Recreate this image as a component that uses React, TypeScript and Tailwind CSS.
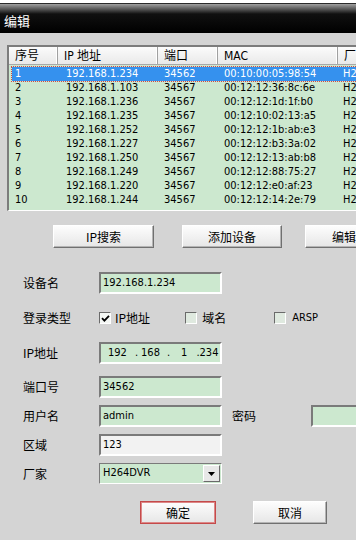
import React from "react";

const LAT = "font-['DejaVu_Sans_Condensed','DejaVu_Sans','Noto_Sans_CJK_SC',sans-serif] text-[11px]";
const CJK = "font-['Noto_Sans_CJK_SC',sans-serif] text-[12px]";

const rows = [
  ["1", "192.168.1.234", "34562", "00:10:00:05:98:54"],
  ["2", "192.168.1.103", "34567", "00:12:12:36:8c:6e"],
  ["3", "192.168.1.236", "34567", "00:12:12:1d:1f:b0"],
  ["4", "192.168.1.235", "34567", "00:12:10:02:13:a5"],
  ["5", "192.168.1.252", "34567", "00:12:12:1b:ab:e3"],
  ["6", "192.168.1.227", "34567", "00:12:12:b3:3a:02"],
  ["7", "192.168.1.250", "34567", "00:12:12:13:ab:b8"],
  ["8", "192.168.1.249", "34567", "00:12:12:88:75:27"],
  ["9", "192.168.1.220", "34567", "00:12:12:e0:af:23"],
  ["10", "192.168.1.244", "34567", "00:12:12:14:2e:79"],
];

function Btn({ label, w, red }: { label: string; w: string; red?: boolean }) {
  return (
    <div
      className={`${w} h-[23px] shrink-0 flex items-center justify-center border ${
        red
          ? "border-[#c44a4a] shadow-[inset_0_0_0_1px_#d88]"
          : "border-t-white border-l-white border-b-[#707070] border-r-[#707070] shadow-[inset_-1px_-1px_0_#b4b4b4]"
      } bg-[linear-gradient(#fdfdfd,#e6e6e6)] text-black ${CJK}`}
    >
      {label}
    </div>
  );
}

function Field({ children, w = "w-[123px]", bg = "bg-[#cce8cf]" }: { children?: React.ReactNode; w?: string; bg?: string }) {
  return (
    <div
      className={`${w} h-[22px] shrink-0 border-2 border-t-[#7a7a7a] border-l-[#7a7a7a] border-b-white border-r-white ${bg} flex items-center pl-[2px] text-black ${LAT}`}
    >
      {children}
    </div>
  );
}

function Label({ children }: { children: React.ReactNode }) {
  return <div className={`w-[76px] shrink-0 text-black ${CJK}`}>{children}</div>;
}

function Check({ checked }: { checked?: boolean }) {
  return (
    <div
      className={`w-[12px] h-[12px] shrink-0 border border-t-[#6a6a6a] border-l-[#6a6a6a] border-b-white border-r-white ${
        checked ? "bg-[#f4f7f4]" : "bg-[#dfe9df]"
      } flex items-center justify-center`}
    >
      {checked && (
        <svg width="9" height="9" viewBox="0 0 9 9">
          <path d="M1 4.2 L3.4 6.6 L8 1.8" stroke="#000" strokeWidth="1.8" fill="none" />
        </svg>
      )}
    </div>
  );
}

export default function App() {
  return (
    <div className="w-[356px] h-[540px] overflow-hidden bg-[#d4d4d4] flex flex-col">
      {/* title bar */}
      <div className="h-[33px] shrink-0 bg-[linear-gradient(#ffffff_0px,#ffffff_3px,#2a2a2a_3px,#2a2a2a_4px,#a0a0a0_4px,#101010_14px,#000000_100%)] flex items-end pb-[5px] pl-[4px]">
        <span className={`text-white ${CJK} text-[13px] leading-[15px]`}>编辑</span>
      </div>

      {/* table */}
      <div className="mt-[12px] ml-[7px] w-[440px] shrink-0 border-t-2 border-l-2 border-t-[#7c7c7c] border-l-[#7c7c7c] border-b border-b-white bg-[#cce8cf]">
        <div className="h-[18px] flex bg-[linear-gradient(#fbfbfb,#e9e9e9)] border-b border-[#a8a8a8] text-black">
          {[
            ["序号", "w-[49px]"],
            ["IP 地址", "w-[100px]"],
            ["端口", "w-[60px]"],
            ["MAC", "w-[120px]"],
            ["厂家", "w-[100px]"],
          ].map(([t, w]) => (
            <div
              key={t}
              className={`${w} shrink-0 h-full flex items-center pl-[6px] border-r border-r-[#a0a0a0] shadow-[inset_-1px_0_0_#ffffff] font-['DejaVu_Sans_Condensed','Noto_Sans_CJK_SC',sans-serif] text-[12px]`}
            >
              {t}
            </div>
          ))}
        </div>
        <div className="pt-[2px] pb-[3px] pl-[3px]">
          {rows.map((r, i) => {
            const sel = i === 0;
            return (
              <div
                key={r[0]}
                className={`h-[14px] flex items-center ${LAT} ${
                  sel ? "bg-[#3591ee] text-white outline outline-1 outline-dotted outline-[#d04848]" : "text-black"
                }`}
              >
                <div className="w-[46px] shrink-0 pl-[3px]">{r[0]}</div>
                <div className="w-[100px] shrink-0 pl-[8px]">{r[1]}</div>
                <div className="w-[60px] shrink-0 pl-[6px]">{r[2]}</div>
                <div className="w-[120px] shrink-0 pl-[6px]">{r[3]}</div>
                <div className="w-[100px] shrink-0 pl-[5px]">H264DVR</div>
              </div>
            );
          })}
        </div>
      </div>

      {/* action buttons */}
      <div className="mt-[14px] ml-[53px] flex shrink-0">
        <Btn label="IP搜索" w="w-[101px]" />
        <div className="w-[28px] shrink-0" />
        <Btn label="添加设备" w="w-[100px]" />
        <div className="w-[23px] shrink-0" />
        <Btn label="编辑" w="w-[78px]" />
      </div>

      {/* form */}
      <div className="ml-[23px] flex flex-col shrink-0">
        <div className="mt-[24px] h-[22px] flex items-center">
          <Label>设备名</Label>
          <Field>192.168.1.234</Field>
        </div>
        <div className="mt-[13px] h-[22px] flex items-center">
          <Label>登录类型</Label>
          <Check checked />
          <span className={`ml-[4px] ${CJK} text-black`}>IP地址</span>
          <div className="ml-[35px]">
            <Check />
          </div>
          <span className={`ml-[5px] ${CJK} text-black`}>域名</span>
          <div className="ml-[48px]">
            <Check />
          </div>
          <span className={`ml-[6px] ${LAT} text-black`}>ARSP</span>
        </div>
        <div className="mt-[13px] h-[22px] flex items-center">
          <Label>IP地址</Label>
          <Field>
            <span className="ml-[5px]">192</span>
            <span className="ml-[8px]">.</span>
            <span className="ml-[3px]">168</span>
            <span className="ml-[7px]">.</span>
            <span className="ml-[11px]">1</span>
            <span className="ml-[9px]">.</span>
            <span>234</span>
          </Field>
        </div>
        <div className="mt-[12px] h-[22px] flex items-center">
          <Label>端口号</Label>
          <Field>34562</Field>
        </div>
        <div className="mt-[7px] h-[22px] flex items-center">
          <Label>用户名</Label>
          <Field>admin</Field>
          <div className={`ml-[10px] w-[79px] shrink-0 ${CJK} text-black`}>密码</div>
          <Field w="w-[80px]" />
        </div>
        <div className="mt-[7px] h-[22px] flex items-center">
          <Label>区域</Label>
          <Field bg="bg-[#f2f2f2]">123</Field>
        </div>
        <div className="mt-[7px] h-[21px] flex items-center">
          <Label>厂家</Label>
          <div className="w-[123px] h-[21px] shrink-0 border border-t-[#7a7a7a] border-l-[#7a7a7a] border-b-white border-r-white bg-[#cce8cf] flex items-center">
            <span className={`pl-[3px] flex-1 text-black ${LAT}`}>H264DVR</span>
            <div className="w-[17px] h-[17px] mr-[1px] border border-t-white border-l-white border-b-[#6a6a6a] border-r-[#6a6a6a] bg-[#e8e8e8] flex items-center justify-center">
              <svg width="7" height="4" viewBox="0 0 7 4">
                <path d="M0 0 H7 L3.5 4 Z" fill="#000" />
              </svg>
            </div>
          </div>
        </div>
      </div>

      {/* bottom buttons */}
      <div className="mt-[17px] ml-[140px] flex shrink-0">
        <Btn label="确定" w="w-[76px]" red />
        <div className="w-[37px] shrink-0" />
        <Btn label="取消" w="w-[74px]" />
      </div>
    </div>
  );
}
